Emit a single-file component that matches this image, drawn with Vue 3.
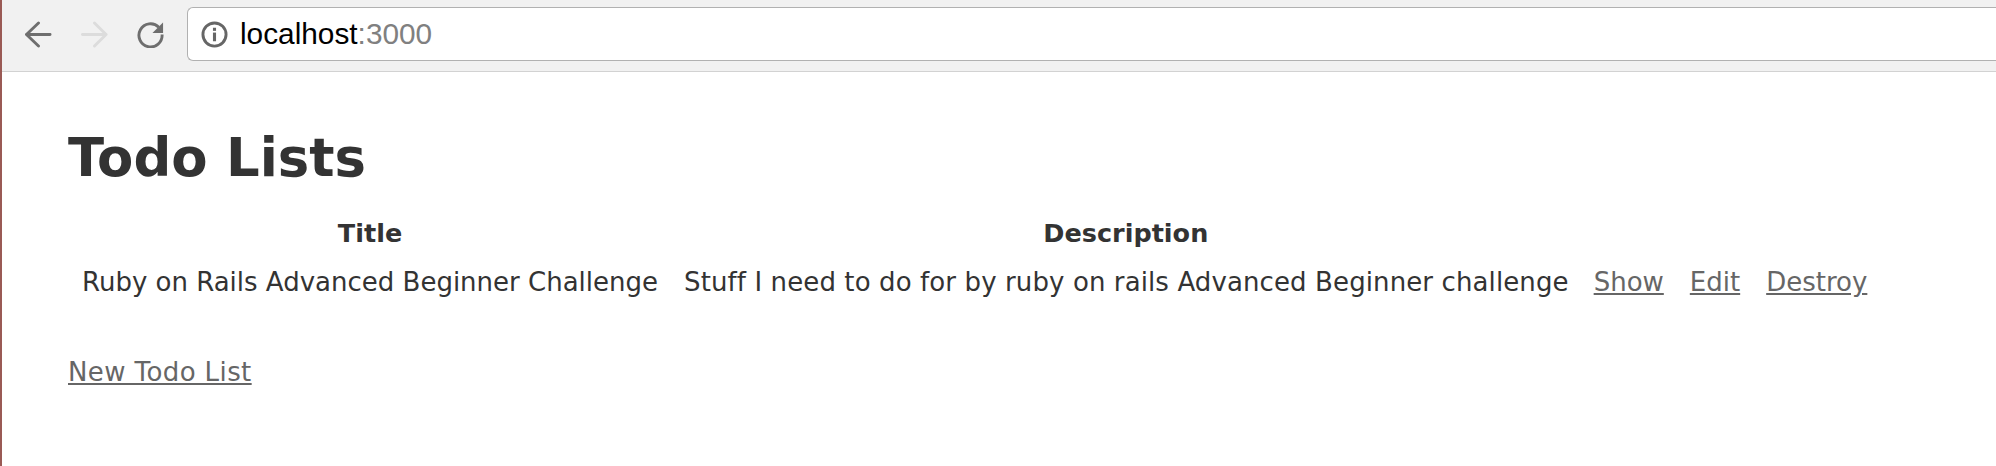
<template>
  <div class="window">
    <!-- Browser toolbar -->
    <div class="toolbar">
      <div class="nav">
        <svg class="nav-icon" viewBox="0 0 28 28" fill="none" stroke="#6e6e6e" stroke-width="3" stroke-linecap="round" stroke-linejoin="round">
          <path d="M1.5 14H26M14 2 1.5 14 14 26" />
        </svg>
        <svg class="nav-icon" viewBox="0 0 28 28" fill="none" stroke="#dcdcdc" stroke-width="3" stroke-linecap="round" stroke-linejoin="round">
          <path d="M26 14H1.5M14 2 26 14 14 26" />
        </svg>
        <svg class="nav-icon" viewBox="0 0 28 28" fill="none">
          <path d="M22.6 6.5A12 12 0 1 0 26 14" stroke="#6e6e6e" stroke-width="3" />
          <path d="M27 1.5V12.5H16Z" fill="#6e6e6e" />
        </svg>
      </div>
      <div class="url-box">
        <svg class="info-icon" viewBox="0 0 28 28" fill="none">
          <circle cx="14" cy="14" r="12" stroke="#666" stroke-width="3" />
          <rect x="12.4" y="7" width="3.2" height="3.2" fill="#666" />
          <rect x="12.4" y="12" width="3.2" height="9" fill="#666" />
        </svg>
        <span class="url">localhost<span class="port">:3000</span></span>
      </div>
    </div>

    <!-- Page content -->
    <div class="page">
      <h1>Todo Lists</h1>
      <table>
        <thead>
          <tr>
            <th>Title</th>
            <th>Description</th>
            <th colspan="3"></th>
          </tr>
        </thead>
        <tbody>
          <tr v-for="todo in todos" :key="todo.title">
            <td>{{ todo.title }}</td>
            <td class="description">{{ todo.description }}</td>
            <td v-for="action in actions" :key="action"><a href="#">{{ action }}</a></td>
          </tr>
        </tbody>
      </table>
      <a class="new-link" href="#">New Todo List</a>
    </div>
  </div>
</template>

<script setup>
const todos = [
  {
    title: 'Ruby on Rails Advanced Beginner Challenge',
    description: 'Stuff I need to do for by ruby on rails Advanced Beginner challenge'
  }
]

const actions = ['Show', 'Edit', 'Destroy']
</script>

<style>
html,
body {
  margin: 0;
  background: #fff;
}
</style>

<style scoped>
.window {
  height: 466px;
  overflow: hidden;
  border-left: 2px solid #9a5a55;
  box-sizing: border-box;
  font-family: "DejaVu Sans", Verdana, sans-serif;
}
.toolbar {
  display: flex;
  align-items: center;
  height: 72px;
  box-sizing: border-box;
  padding: 7px 0 10px 23px;
  background: #f1f1f1;
  border-bottom: 1px solid #d2d2d2;
}
.nav {
  display: flex;
  gap: 29px;
  width: 162px;
}
.nav-icon {
  width: 27px;
  height: 27px;
}
.url-box {
  flex: 1;
  display: flex;
  align-items: center;
  align-self: stretch;
  padding-left: 13px;
  background: #fff;
  border: 1px solid #b1b1b1;
  border-right: none;
  border-radius: 6px 0 0 6px;
}
.info-icon {
  width: 27px;
  height: 27px;
  margin-right: 12px;
}
.url {
  font-family: "Liberation Sans", Arial, sans-serif;
  font-size: 29.8px;
  color: #000;
}
.port {
  color: #808080;
}
.page {
  padding: 0 66px;
  color: #333;
  font-size: 26px;
}
h1 {
  margin: 0;
  padding-top: 56px;
  font-size: 52.9px;
  line-height: 60px;
  font-weight: bold;
}
table {
  margin: 20px 0 0 1px;
  border-spacing: 0;
}
th,
td {
  padding: 12px 13px;
  line-height: 26px;
}
th {
  padding-bottom: 11px;
  font-size: 25.5px;
  font-weight: bold;
}
.description {
  padding-right: 12px;
  letter-spacing: 0.11px;
}
a {
  color: #666;
}
.new-link {
  display: inline-block;
  margin-top: 50px;
  line-height: 30px;
  letter-spacing: 0.4px;
}
</style>
